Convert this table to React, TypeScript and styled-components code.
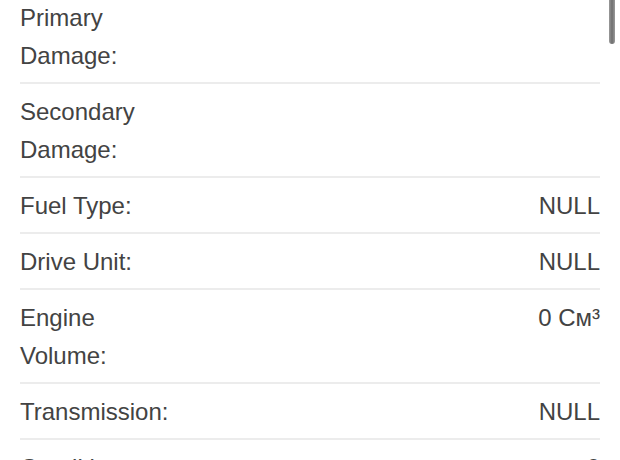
import React from "react";
import styled, { createGlobalStyle } from "styled-components";

const GlobalStyle = createGlobalStyle`
  html, body {
    margin: 0;
    padding: 0;
    background: #ffffff;
    overflow: hidden;
  }
  body {
    font-family: "Liberation Sans", Arial, Helvetica, sans-serif;
  }
`;

const Viewport = styled.div`
  position: relative;
  width: 620px;
  height: 460px;
  overflow: hidden;
  background: #ffffff;
`;

const List = styled.div`
  display: flex;
  flex-direction: column;
  margin-top: -10px;
  padding: 0 20px;
`;

const Row = styled.div`
  display: grid;
  grid-template-columns: 160px 1fr;
  align-items: start;
  padding: 9px 0 7px;
  border-bottom: 2px solid #ececec;
  font-size: 24px;
  line-height: 38px;
  color: #434343;
`;

const Label = styled.div`
  text-align: left;
`;

const Value = styled.div`
  text-align: right;
  white-space: nowrap;
`;

const Scrollbar = styled.div`
  position: absolute;
  top: 0;
  right: 5px;
  width: 6px;
  height: 44px;
  border-radius: 0 0 3px 3px;
  background: linear-gradient(to right, #9a9a9a, #6e6e6e 50%, #9a9a9a);
`;

type Item = { label: string; value: string };

const items: Item[] = [
  { label: "Primary Damage:", value: "" },
  { label: "Secondary Damage:", value: "" },
  { label: "Fuel Type:", value: "NULL" },
  { label: "Drive Unit:", value: "NULL" },
  { label: "Engine Volume:", value: "0 См³" },
  { label: "Transmission:", value: "NULL" },
  { label: "Condition:", value: "0" },
];

export default function App() {
  return (
    <>
      <GlobalStyle />
      <Viewport>
        <List>
          {items.map((it) => (
            <Row key={it.label}>
              <Label>{it.label}</Label>
              <Value>{it.value}</Value>
            </Row>
          ))}
        </List>
        <Scrollbar />
      </Viewport>
    </>
  );
}
